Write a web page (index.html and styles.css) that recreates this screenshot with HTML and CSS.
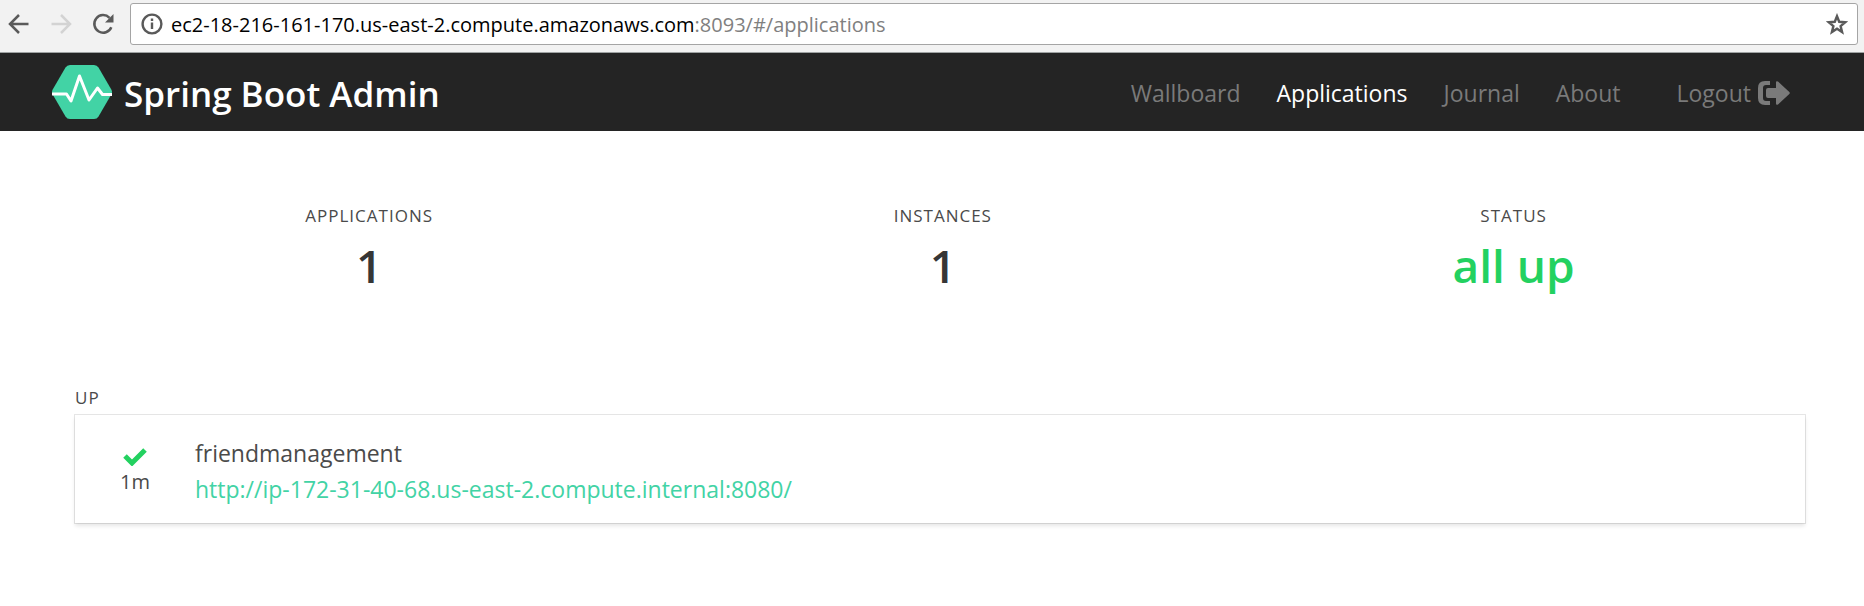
FILE: index.html
```html
<!DOCTYPE html>
<html lang="en">
<head>
<meta charset="utf-8">
<title>Spring Boot Admin</title>
<link rel="stylesheet" href="styles.css">
</head>
<body>
<div class="toolbar">
  <button class="tool" type="button" aria-label="Back">
    <svg width="22" height="22" viewBox="0 0 22 22"><path d="M20.500 11H2.500M11 2L2 11l9 9" /></svg>
  </button>
  <button class="tool" type="button" aria-label="Forward" disabled>
    <svg width="22" height="22" viewBox="0 0 22 22"><path d="M1.500 11h18M11 2l9 9-9 9" /></svg>
  </button>
  <button class="tool" type="button" aria-label="Reload">
    <svg width="22" height="22" viewBox="0 0 22 22"><path d="M17.500 4.800A8.800 8.800 0 1 0 19.300 14.200" /><path class="solid" d="M21.500 1v8.500h-8.500z" /></svg>
  </button>
  <div class="address">
    <svg class="info" width="22" height="22" viewBox="0 0 22 22"><circle cx="11" cy="11" r="9.400" /><path d="M11 9.500v6.500M11 5.500v2.400" /></svg>
    <a class="url" href="#/applications">ec2-18-216-161-170.us-east-2.compute.amazonaws.com<span class="path">:8093/#/applications</span></a>
    <button class="star" type="button" aria-label="Bookmark this page">
      <svg width="22" height="22" viewBox="0 0 22 22"><path d="M11 3.200l2.200 5.600 6 .4-4.600 3.900 1.500 6-5.100-3.300-5.100 3.300 1.500-6L2.800 9.200l6-.4z" /></svg>
    </button>
  </div>
</div>
<header class="navbar">
  <a class="brand" href="#/">
    <svg width="60" height="54" viewBox="0 0 60 54"><path class="hex" d="M18 0h24q3 0 4.500 2.500L59.300 24.500q1.400 2.500 0 5L46.500 51.500Q45 54 42 54H18q-3 0-4.500-2.500L.700 29.500q-1.400-2.500 0-5L13.500 2.500Q15 0 18 0z" /><path class="pulse" d="M0 29h14.500l4.500 7L27.500 11l9.500 24 8.500-12 5 6.500H60" /></svg>
    <span class="title">Spring Boot Admin</span>
  </a>
  <nav class="menu">
    <a href="#/wallboard">Wallboard</a>
    <a class="active" href="#/applications">Applications</a>
    <a href="#/journal">Journal</a>
    <a href="#/about">About</a>
    <a class="logout" href="#/logout">Logout
      <svg width="32" height="24" viewBox="0 0 32 24"><path d="M12 0v4H8Q5 4 5 7v10q0 3 3 3h4v4H7Q0 24 0 17V7Q0 0 7 0z" /><path d="M18 1.500q0-2 2-1L31.300 11q1 1 0 2L20 23.500q-2 1-2-1V17H10q-2 0-2-2V9q0-2 2-2h8z" /></svg>
    </a>
  </nav>
</header>
<main class="content">
  <section class="stats">
    <div class="stat"><p class="heading">APPLICATIONS</p><p class="value">1</p></div>
    <div class="stat"><p class="heading">INSTANCES</p><p class="value">1</p></div>
    <div class="stat"><p class="heading">STATUS</p><p class="value up">all up</p></div>
  </section>
  <section class="group">
    <h2 class="heading">UP</h2>
    <article class="card">
      <div class="state">
        <svg width="24" height="18" viewBox="0 0 24 18"><path d="M2 8l7 7L22 2" /></svg>
        <span>1m</span>
      </div>
      <div class="details">
        <span>friendmanagement</span>
        <a href="http://ip-172-31-40-68.us-east-2.compute.internal:8080/">http://ip-172-31-40-68.us-east-2.compute.internal:8080/</a>
      </div>
    </article>
  </section>
</main>
</body>
</html>
```
FILE: styles.css
```css
* { box-sizing: border-box; }
body {
  margin: 0;
  background: #fff;
  color: #4a4a4a;
  font: 23px/36px "Open Sans", "Noto Sans", sans-serif;
}
p, h2 { margin: 0; }
a { color: inherit; text-decoration: none; }
svg { display: block; flex: none; }
button { padding: 0; border: 0; background: none; color: #5a5a5a; }

.toolbar {
  display: flex;
  align-items: center;
  gap: 20px;
  padding: 3px 6px 7px 8px;
  background: #f2f2f2;
  border-bottom: 1px solid #9fa3a3;
}
.tool svg { fill: none; stroke: currentColor; stroke-width: 2.5; }
.tool .solid { fill: currentColor; stroke: none; }
.tool:disabled { color: #d3d3d3; }
.address {
  flex: 1;
  display: flex;
  align-items: center;
  gap: 8px;
  height: 42px;
  margin-left: -4px;
  padding: 0 9px 0 10px;
  background: #fff;
  border: 1px solid #a5a5a5;
  border-radius: 3px;
}
.info, .star svg { fill: none; stroke: #5a5a5a; stroke-width: 2.4; }
.url { flex: 1; padding-top: 2px; color: #000; font-size: 20px; }
.path { color: #808080; }

.navbar {
  display: flex;
  justify-content: space-between;
  align-items: center;
  height: 78px;
  padding: 0 74px 0 52px;
  background: #242424;
}
.brand {
  display: flex;
  align-items: center;
  gap: 12px;
  color: #fff;
  font-size: 35px;
  font-weight: 600;
}
.title { padding-top: 4px; }
.hex { fill: #42d3a5; }
.pulse { fill: none; stroke: #fff; stroke-width: 3; stroke-linejoin: round; }
.menu { display: flex; gap: 36px; padding-top: 2px; color: #7a7a7a; }
.menu .active { color: #fff; }
.logout { display: flex; align-items: center; gap: 7px; margin-left: 20px; }
.logout svg { fill: #7a7a7a; }

.content { padding: 72px 59px 72px 75px; }
.stats { display: flex; margin-bottom: 84px; }
.stat { flex: 1 1 auto; text-align: center; }
.heading {
  font-size: 17px;
  font-weight: 400;
  line-height: 26px;
  letter-spacing: 1px;
}
.group .heading { margin-bottom: 4px; }
.value { color: #363636; font-size: 46px; font-weight: 600; line-height: 72px; }
.value.up { color: #23d160; }
.card {
  display: flex;
  align-items: center;
  padding: 20px 42px 16px;
  background: #fff;
  box-shadow: 0 3px 4px rgba(10, 10, 10, .1), 0 0 0 1px rgba(10, 10, 10, .1);
}
.state {
  display: flex;
  flex-direction: column;
  align-items: center;
  width: 36px;
  padding-top: 4px;
  font-size: 20px;
  line-height: 32px;
}
.state svg { fill: none; stroke: #23d160; stroke-width: 5; }
.details { display: flex; flex-direction: column; margin-left: 42px; }
.details a { color: #42d3a5; }
```
